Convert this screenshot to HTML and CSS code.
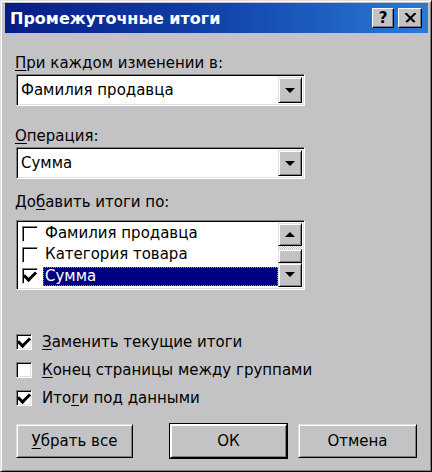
FILE: index.html
```html
<!DOCTYPE html>
<html lang="ru">
<head>
    <meta charset="UTF-8">
    <title>Промежуточные итоги</title>
    <link rel="stylesheet" href="styles.css">
</head>
<body>
    <div class="window">
        <!-- Title bar -->
        <div class="titlebar">
            <span class="title">Промежуточные итоги</span>
            <div class="caption-buttons">
                <div class="cap-btn help">?</div>
                <div class="cap-btn close">
                    <svg width="11" height="10" viewBox="0 0 11 10">
                        <path d="M1 0 L10 9 M0 0 L9 9 M10 0 L1 9 M11 0 L2 9" stroke="#000" stroke-width="1.4" fill="none"/>
                    </svg>
                </div>
            </div>
        </div>

        <div class="content">
            <div class="label"><u>П</u>ри каждом изменении в:</div>
            <div class="combo">
                <span class="combo-text">Фамилия продавца</span>
                <span class="drop-btn"><span class="arrow-down"></span></span>
            </div>

            <div class="label label-gap"><u>О</u>перация:</div>
            <div class="combo">
                <span class="combo-text">Сумма</span>
                <span class="drop-btn"><span class="arrow-down"></span></span>
            </div>

            <div class="label label-gap-2">До<u>б</u>авить итоги по:</div>
            <div class="listbox">
                <div class="list-items">
                    <div class="list-row">
                        <span class="check"></span>
                        <span class="item-text">Фамилия продавца</span>
                    </div>
                    <div class="list-row">
                        <span class="check"></span>
                        <span class="item-text">Категория товара</span>
                    </div>
                    <div class="list-row">
                        <span class="check checked"></span>
                        <span class="item-text selected">Сумма</span>
                    </div>
                </div>
                <div class="scrollbar">
                    <span class="scroll-btn"><span class="arrow-up"></span></span>
                    <span class="scroll-track"></span>
                    <span class="scroll-thumb"></span>
                    <span class="scroll-btn tall"><span class="arrow-down"></span></span>
                </div>
            </div>

            <div class="options">
                <div class="option">
                    <span class="check checked"></span>
                    <span><u>З</u>аменить текущие итоги</span>
                </div>
                <div class="option">
                    <span class="check"></span>
                    <span><u>К</u>онец страницы между группами</span>
                </div>
                <div class="option">
                    <span class="check checked"></span>
                    <span>Ито<u>г</u>и под данными</span>
                </div>
            </div>

            <div class="button-row">
                <div class="btn"><u>У</u>брать все</div>
                <div class="btn-group">
                    <div class="btn default">ОК</div>
                    <div class="btn wide">Отмена</div>
                </div>
            </div>
        </div>
    </div>
</body>
</html>
```

FILE: styles.css
```css
/* Reset */
* {
    margin: 0;
    padding: 0;
    box-sizing: border-box;
}

body {
    width: 432px;
    height: 472px;
    overflow: hidden;
    background: #c3c3c5;
    font-family: "DejaVu Sans", "Liberation Sans", sans-serif;
    font-size: 15px;
    color: #000;
}

u {
    text-underline-offset: 2px;
}

/* Window frame */
.window {
    width: 432px;
    height: 472px;
    display: flex;
    flex-direction: column;
    background: #c3c3c5;
    border: 1px solid;
    border-color: #dfdfdf #000 #000 #dfdfdf;
    box-shadow: inset 1px 1px #fff, inset -1px -1px #808080;
    padding: 2px 3px 3px 4px;
}

/* Title bar */
.titlebar {
    height: 30px;
    display: flex;
    align-items: center;
    padding: 0 6px 0 5px;
    background: linear-gradient(90deg, #081c86 0%, #0f3ea6 45%, #2a7ad6 100%);
}

.title {
    flex: 1;
    color: #fff;
    font-weight: bold;
    font-size: 16px;
}

.caption-buttons {
    display: flex;
    gap: 4px;
}

.cap-btn {
    width: 22px;
    height: 20px;
    display: flex;
    align-items: center;
    justify-content: center;
    background: #c3c3c5;
    border: 1px solid;
    border-color: #fff #000 #000 #fff;
    box-shadow: inset -1px -1px #808080;
    font-weight: bold;
    font-size: 15px;
    line-height: 1;
}

.cap-btn.close {
    width: 24px;
}

/* Main content */
.content {
    flex: 1;
    display: flex;
    flex-direction: column;
    padding: 20px 11px 0 11px;
}

.label {
    line-height: 20px;
    margin-left: -1px;
}

.label-gap {
    margin-top: 20px;
}

.label-gap-2 {
    margin-top: 13px;
}

/* Sunken field (combo, listbox, checkbox) */
.combo,
.listbox,
.check {
    background: #fff;
    border: 1px solid;
    border-color: #808080 #fff #fff #808080;
    box-shadow: inset 1px 1px #000, inset -1px -1px #dfdfdf;
}

.combo {
    width: 289px;
    height: 32px;
    margin-top: 1px;
    display: flex;
    align-items: center;
    padding: 2px 2px 2px 4px;
}

.combo-text {
    flex: 1;
}

/* Raised buttons */
.drop-btn,
.scroll-btn,
.scroll-thumb,
.btn {
    background: #c3c3c5;
    border: 1px solid;
    border-color: #dfdfdf #000 #000 #dfdfdf;
    box-shadow: inset 1px 1px #fff, inset -1px -1px #808080;
}

.drop-btn {
    width: 24px;
    height: 100%;
    display: flex;
    align-items: center;
    justify-content: center;
}

.arrow-down,
.arrow-up {
    width: 0;
    height: 0;
    border-left: 5px solid transparent;
    border-right: 5px solid transparent;
}

.arrow-down {
    border-top: 5px solid #000;
}

.arrow-up {
    border-bottom: 5px solid #000;
}

/* List box */
.listbox {
    width: 289px;
    height: 70px;
    margin-top: 8px;
    display: flex;
    padding: 2px;
}

.list-items {
    flex: 1;
    display: flex;
    flex-direction: column;
}

.list-row {
    height: 22px;
    display: flex;
    align-items: center;
    padding-left: 3px;
}

.list-row .check {
    box-shadow: inset 1px 1px #000;
}

.item-text {
    flex: 1;
    margin-left: 5px;
    padding-left: 1px;
    line-height: 17px;
    border: 1px solid transparent;
}

.item-text.selected {
    background: #000080;
    color: #fff;
    border: 1px dotted #8080c0;
}

.scrollbar {
    width: 24px;
    display: flex;
    flex-direction: column;
}

.scroll-btn {
    height: 24px;
    display: flex;
    align-items: center;
    justify-content: center;
}

.scroll-btn.tall {
    height: 25px;
}

.scroll-track {
    height: 3px;
    background: repeating-conic-gradient(#fff 0 25%, #c3c3c5 0 50%) 0 0 / 2px 2px;
}

.scroll-thumb {
    height: 14px;
}

/* Check boxes */
.check {
    width: 16px;
    height: 16px;
    flex-shrink: 0;
    display: flex;
    align-items: center;
    justify-content: center;
}

.check.checked::after {
    content: "";
    width: 9px;
    height: 5px;
    border-left: 3px solid #000;
    border-bottom: 3px solid #000;
    transform: translateY(-1px) rotate(-45deg);
}

.options {
    margin-top: 38px;
    display: flex;
    flex-direction: column;
}

.option {
    height: 28px;
    display: flex;
    align-items: center;
    gap: 10px;
}

/* Bottom buttons */
.button-row {
    margin-top: 12px;
    display: flex;
    justify-content: space-between;
}

.btn-group {
    display: flex;
    gap: 11px;
}

.btn {
    width: 117px;
    height: 34px;
    display: flex;
    align-items: center;
    justify-content: center;
}

.btn.wide {
    width: 119px;
}

.btn.default {
    outline: 1px solid #000;
    border-color: #fff #000 #000 #fff;
}
```
